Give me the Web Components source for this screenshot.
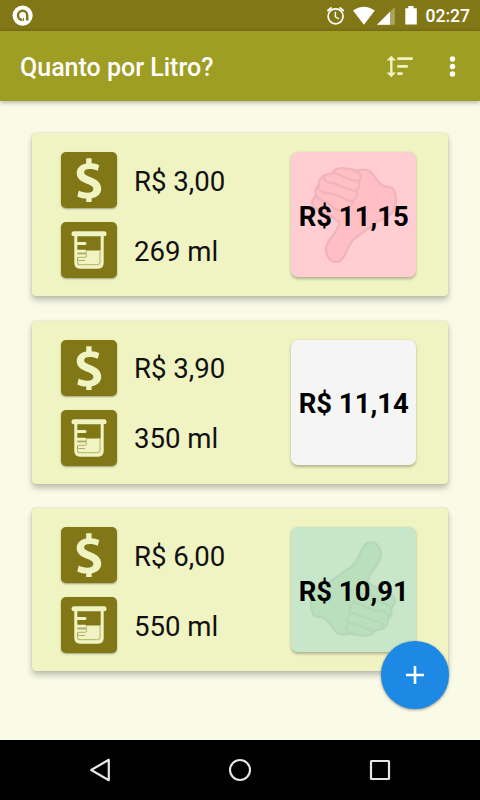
<!DOCTYPE html>
<html lang="pt-BR">
<head>
<meta charset="utf-8">
<title>Quanto por Litro?</title>
<style>
html,body{margin:0;height:100%;overflow:hidden}
body{font-family:Roboto,sans-serif;background:#f9fbe7}
</style>
</head>
<body>
<litro-app></litro-app>
<script>
function define(name, html, setup) {
  customElements.define(name, class extends HTMLElement {
    connectedCallback() {
      if (this.shadowRoot) return;
      const t = document.createElement('template');
      t.innerHTML = html;
      this.attachShadow({mode: 'open'}).appendChild(t.content.cloneNode(true));
      if (setup) setup(this, this.shadowRoot);
    }
  });
}

define('status-bar', `
<style>
:host{display:flex;height:31px;background:#827717;color:#fff;align-items:center;box-sizing:border-box;padding:0 10px 0 12px}
svg{display:block;flex:none}
.logo{margin-right:auto}
.time{font:500 17.5px/31px Roboto,sans-serif;margin-left:8px;padding-top:1px}
</style>
<svg class="logo" width="22" height="31" viewBox="0 0 22 31"><circle cx="10.6" cy="15.6" r="10.1" fill="#fff"/><path d="M10.400 20A4.600 4.600 0 1 1 15.200 15.400V20.500" fill="none" stroke="#827717" stroke-width="2.500"/><path d="M11.600 17.700V21" stroke="#827717" stroke-width="1"/><circle cx="10.600" cy="15.400" r="2.300" fill="#fff"/></svg>
<svg width="92" height="31" viewBox="326 0 92 31">
<g fill="none" stroke="#fff" stroke-width="1.7"><circle cx="335.6" cy="16.3" r="7.5"/><path d="M335.4 11.8v5l3.6 2.2" stroke-width="1.4"/><path d="M327.4 11l4.2-3.5M343.8 11l-4.2-3.5" stroke-width="1.9"/></g>
<path d="M353 10.5Q363.800 2.800 374.800 10.500L363.900 24.700Z" fill="#fff"/>
<path d="M394.800 7V24.800H377Z" fill="#fff" opacity=".33"/><path d="M390 11.800V24.800H377Z" fill="#fff"/>
<path d="M405.300 8.200h2.900V6h5.400v2.200h3.200V24.600h-11.500z" fill="#fff"/>
</svg>
<span class="time">02:27</span>`);

define('app-bar', `
<style>
:host{display:flex;height:70px;background:#9e9d24;color:#fff;align-items:center;box-sizing:border-box;padding:0 20px;box-shadow:0 1px 5px rgba(0,0,0,.35);position:relative}
h1{font:500 25px/30px Roboto,sans-serif;margin:4px auto 0 0}
svg{display:block}
</style>
<h1><slot></slot></h1>
<svg width="76" height="70" viewBox="384 31 76 70">
<g fill="#f0f4c3"><path d="M391.300 55.800l4.700 4.700h-3.500v12h3.500l-4.700 4.700-4.700-4.700h3.500v-12h-3.500zM397.300 57.200h15.500v2.800h-15.500zM397.300 65h10.500v2.700h-10.500zM397.300 72.300h5.300v2.700h-5.300z"/></g>
<g fill="#fff"><circle cx="452.500" cy="59" r="2.700"/><circle cx="452.500" cy="66.500" r="2.700"/><circle cx="452.500" cy="74" r="2.700"/></g>
</svg>`);

define('item-icon', `
<style>
:host{display:block;width:56px;height:56px;border-radius:5px;background:#827717;box-shadow:0 1px 2px rgba(0,0,0,.35)}
svg{display:block}
</style><svg width="56" height="56" viewBox="0 0 56 56"></svg>`, (el, root) => {
  const art = {
    money: '<path d="M25.200 6.200h5.400v5.100c3 .2 5.400.8 7.600 1.800l-1.400 5.700c-2.800-1.200-5-1.800-7.900-1.800-4 0-5.800 1.200-5.800 3.300 0 2.400 2.600 3.300 7.200 5.200 6.600 2.700 9.900 6 9.900 11.300 0 4.800-3.300 8.500-9.600 9.600v3.600h-5.400v-3.500c-3.600-.1-6.800-.9-8.900-2.100l1.500-5.800c2.400 1.300 5.400 2.200 8.500 2.200 4 0 6.100-1.500 6.100-3.800 0-2.300-1.900-3.500-6.500-5.200-6.400-2.400-10.200-5.600-10.200-11 0-4.600 3.300-8.300 9.500-9.400z" fill="#f0f4c3"/>',
    volume: '<g fill="none" stroke="#f0f4c3"><path d="M13 11.800H43" stroke-width="5" stroke-linecap="round"/><path d="M14.800 13V41q0 4.200 4.200 4.200H37q4.200 0 4.200-4.200V13" stroke-width="3"/><path d="M16 21.500h8M16 29.300h8" stroke-width="3" stroke-linecap="round"/></g><path d="M25.500 28.500H40V41q0 3-3 3H19q-2.500 0-3-3V31.500h9.500z" fill="#f0f4c3"/><path d="M16.400 31.900H24Q25.700 31.900 25.700 33.600T24 35.300H17.800Q16.400 35.300 16.400 36.900T17.800 38.500H24M16.500 35.500V40.400q0 2.300 2.800 2.300h17q2.700 0 2.700-2.700V29" fill="none" stroke="#a59c4d" stroke-width=".8"/><path d="M17 25.300h8.500" stroke="#827717" stroke-width="2"/>'
  };
  root.querySelector('svg').innerHTML = art[el.getAttribute('kind')];
});

define('price-tile', `
<style>
:host{display:grid;place-items:center;width:125px;height:125px;border-radius:7px;background:#f5f5f5;box-shadow:0 1.500px 3px rgba(0,0,0,.27);--hand:#ffbfc5;--line:#f0b5ba}
:host([rank="worst"]){background:#ffcdd2}
:host([rank="best"]){background:#c8e6c9;--hand:#b9dfbc;--line:#b6d8b8}
svg{grid-area:1/1;display:none;width:125px;height:125px}
:host([rank]) svg{display:block}
:host([rank="best"]) svg{transform:rotate(180deg)}
span{grid-area:1/1;font:700 27.500px/32px Roboto,sans-serif;color:#000;z-index:1;margin-top:4px;white-space:nowrap}
</style>
<svg viewBox="33 36 376 376"><g fill="var(--hand)" stroke="var(--line)" stroke-width="7" stroke-linejoin="round" stroke-linecap="round">
<path d="M158 99C162 88 178 83 195 85C208 85 218 91 230 91C244 91 253 87 264 91C282 98 286 120 306 136C318 144 333 137 341 148C351 164 350 186 344 205C337 228 315 236 298 242C277 256 251 278 229 292C203 310 204 337 188 356C177 372 155 368 146 353C132 333 138 315 156 291C169 272 178 263 178 247C163 235 141 222 120 212C101 207 92 196 98 182C101 174 107 169 109 165C102 154 110 141 117 134C116 119 125 108 138 105C145 103 151 103 158 99Z"/>
<path fill="none" d="M158 99C178 102 189 112 208 117C218 123 239 127 243 113C246 99 229 94 218 90M138 105C126 118 139 128 155 129C177 132 190 145 215 151C235 158 240 142 238 127M117 134C111 151 127 159 145 160C169 161 185 173 202 180C222 192 234 168 231 158M109 165C109 178 126 182 142 187C155 199 160 209 180 211C202 214 218 194 220 187"/>
</g></svg><span><slot></slot></span>`);

define('product-card', `
<style>
:host{display:flex;flex:none;box-sizing:border-box;width:416px;height:163px;padding:19px 31.800px 19px 29.300px;background:#f0f4c3;border-radius:4px;box-shadow:0 4px 6px rgba(0,0,0,.24),0 0 2px rgba(0,0,0,.15);justify-content:space-between}
.rows{display:flex;flex-direction:column;gap:14px}
.row{display:flex;gap:16.700px;align-items:center}
.row span{font:400 27.600px/32px Roboto,sans-serif;color:#111;margin-top:3px}
</style>
<div class="rows"><div class="row"><item-icon kind="money"></item-icon><span><slot name="price"></slot></span></div>
<div class="row"><item-icon kind="volume"></item-icon><span><slot name="volume"></slot></span></div></div>
<slot name="tile"></slot>`);

define('add-button', `
<style>
:host{display:block;width:67.500px;height:67.500px;border-radius:50%;background:#1e88e5;box-shadow:0 1px 3px rgba(0,0,0,.4)}
svg{display:block}
</style><svg width="68" height="68" viewBox="0 0 68 68"><path d="M34 25v18M25 34h18" stroke="#fff" stroke-width="2.600"/></svg>`);

define('nav-bar', `
<style>
:host{display:flex;height:60px;background:#000;justify-content:space-between;align-items:center;padding:0 88px}
svg{display:block}
</style>
<svg width="24" height="26" viewBox="0 0 24 26"><path d="M20.800 2.800V23.200L3.200 13Z" fill="none" stroke="#e6e6e6" stroke-width="2.200" stroke-linejoin="round"/></svg>
<svg width="24" height="26" viewBox="0 0 24 26"><circle cx="12" cy="13" r="10" fill="none" stroke="#e6e6e6" stroke-width="2.100"/></svg>
<svg width="24" height="26" viewBox="0 0 24 26"><rect x="3" y="4" width="18" height="18" rx=".5" fill="none" stroke="#e6e6e6" stroke-width="2.200"/></svg>`);

define('litro-app', `
<style>
:host{display:flex;flex-direction:column;width:480px;height:800px;background:#f9fbe7;position:relative}
main{flex:1;display:flex;flex-direction:column;gap:24.500px;padding:32.200px 32px 0}
add-button{position:absolute;left:381px;top:641px}
</style>
<status-bar></status-bar><app-bar>Quanto por Litro?</app-bar>
<main>
<product-card><span slot="price">R$ 3,00</span><span slot="volume">269 ml</span><price-tile slot="tile" rank="worst">R$ 11,15</price-tile></product-card>
<product-card><span slot="price">R$ 3,90</span><span slot="volume">350 ml</span><price-tile slot="tile">R$ 11,14</price-tile></product-card>
<product-card><span slot="price">R$ 6,00</span><span slot="volume">550 ml</span><price-tile slot="tile" rank="best">R$ 10,91</price-tile></product-card>
</main>
<nav-bar></nav-bar><add-button></add-button>`);
</script>
</body>
</html>
